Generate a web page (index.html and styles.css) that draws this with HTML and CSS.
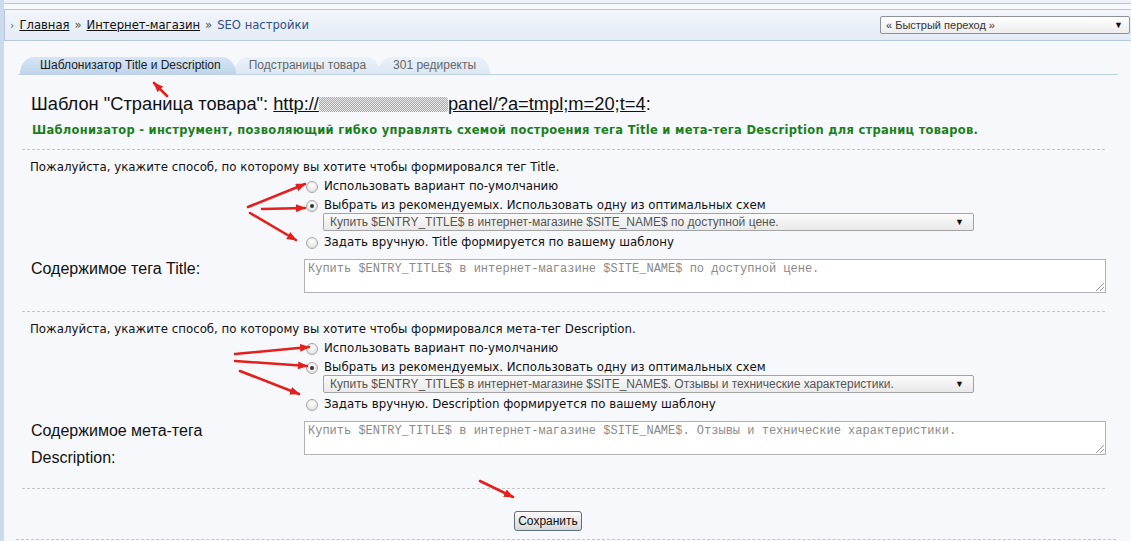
FILE: index.html
```html
<!DOCTYPE html>
<html lang="ru">
<head>
<meta charset="utf-8">
<title>SEO настройки</title>
<link rel="stylesheet" href="styles.css">
</head>
<body>
<div class="page">
  <div class="topline"></div>
  <div class="topbar">
    <div class="crumbs">
      <span class="chev">›</span>
      <a class="crumb" href="#">Главная</a>
      <span class="sep">»</span>
      <a class="crumb" href="#">Интернет-магазин</a>
      <span class="sep">»</span>
      <span class="current">SEO настройки</span>
    </div>
    <div class="quick">
      <span>« Быстрый переход »</span>
      <span class="tri">▼</span>
    </div>
  </div>

  <div class="content">
    <div class="tabs">
      <div class="tab active">Шаблонизатор Title и Description</div>
      <div class="tab">Подстраницы товара</div>
      <div class="tab">301 редиректы</div>
    </div>

    <h1 class="heading">Шаблон "Страница товара": <a class="url" href="#">http://<span class="blur"></span>panel/?a=tmpl;m=20;t=4</a>:</h1>
    <p class="green">Шаблонизатор - инструмент, позволяющий гибко управлять схемой построения тега Title и мета-тега Description для страниц товаров.</p>
    <div class="dash"></div>

    <div class="section">
      <div class="ask">Пожалуйста, укажите способ, по которому вы хотите чтобы формировался тег Title.</div>
      <div class="radios">
        <div class="radio-row"><span class="radio"></span>Использовать вариант по-умолчанию</div>
        <div class="radio-row"><span class="radio checked"></span>Выбрать из рекомендуемых. Использовать одну из оптимальных схем</div>
        <div class="select"><span>Купить $ENTRY_TITLE$ в интернет-магазине $SITE_NAME$ по доступной цене.</span><span class="tri">▼</span></div>
        <div class="radio-row third"><span class="radio"></span>Задать вручную. Title формируется по вашему шаблону</div>
      </div>
      <div class="field">
        <div class="label">Содержимое тега Title:</div>
        <div class="textarea">Купить $ENTRY_TITLE$ в интернет-магазине $SITE_NAME$ по доступной цене.<span class="grip"></span></div>
      </div>
    </div>
    <div class="dash d2"></div>

    <div class="section">
      <div class="ask">Пожалуйста, укажите способ, по которому вы хотите чтобы формировался мета-тег Description.</div>
      <div class="radios">
        <div class="radio-row"><span class="radio"></span>Использовать вариант по-умолчанию</div>
        <div class="radio-row"><span class="radio checked"></span>Выбрать из рекомендуемых. Использовать одну из оптимальных схем</div>
        <div class="select"><span>Купить $ENTRY_TITLE$ в интернет-магазине $SITE_NAME$. Отзывы и технические характеристики.</span><span class="tri">▼</span></div>
        <div class="radio-row third"><span class="radio"></span>Задать вручную. Description формируется по вашему шаблону</div>
      </div>
      <div class="field">
        <div class="label">Содержимое мета-тега<br>Description:</div>
        <div class="textarea">Купить $ENTRY_TITLE$ в интернет-магазине $SITE_NAME$. Отзывы и технические характеристики.<span class="grip"></span></div>
      </div>
    </div>
    <div class="dash d3"></div>

    <div class="actions"><button class="save" type="button">Сохранить</button></div>
    <div class="dash d4"></div>
  </div>

  <svg class="arrows" width="1131" height="541" viewBox="0 0 1131 541" xmlns="http://www.w3.org/2000/svg">
    <defs>
      <marker id="ah" markerWidth="10" markerHeight="8" refX="9" refY="4" orient="auto" markerUnits="userSpaceOnUse">
        <path d="M0,0 L10,4 L0,8 Z" fill="#e3201b"/>
      </marker>
    </defs>
    <g stroke="#e3201b" stroke-width="2.6" fill="none" marker-end="url(#ah)" stroke-linecap="round">
      <line x1="167" y1="96" x2="154" y2="83"/>
      <line x1="248" y1="207" x2="305" y2="184"/>
      <line x1="262" y1="209" x2="305" y2="208"/>
      <line x1="250" y1="213" x2="296" y2="240"/>
      <line x1="235" y1="354" x2="309" y2="347"/>
      <line x1="235" y1="361" x2="307" y2="366"/>
      <line x1="240" y1="371" x2="299" y2="394"/>
      <line x1="480" y1="481" x2="513" y2="497"/>
    </g>
  </svg>
</div>
</body>
</html>
```

FILE: styles.css
```css
* { box-sizing: border-box; }

html, body {
  margin: 0;
  padding: 0;
  background: #f5f7fb;
}

.page {
  position: relative;
  width: 1131px;
  height: 541px;
  overflow: hidden;
  background: #f6f8fc;
  border-left: 4px solid #cbdaec;
  font-family: "DejaVu Sans", Verdana, sans-serif;
  color: #111;
}

.topline {
  height: 4px;
  background: #eef3f9;
  border-bottom: 1px solid #b9c9dc;
}

.topbar {
  margin-top: 5px;
  height: 32px;
  border: 1px solid #b7c8dd;
  border-right: none;
  background: linear-gradient(#f3f6fb, #e3ebf5);
  display: flex;
  align-items: center;
  justify-content: space-between;
  padding: 0 1px 0 5px;
}

.crumbs {
  font-size: 11.6px;
  display: flex;
  align-items: center;
  gap: 5px;
}

.chev { color: #666; font-size: 11px; margin-right: 0; }
.crumb { color: #111; text-decoration: underline; }
.sep { color: #555; }
.current { color: #2f4f8a; }

.quick {
  width: 250px;
  height: 18px;
  border: 1px solid #8f9399;
  border-radius: 2px;
  background: linear-gradient(#ffffff, #ececec);
  font-family: "Liberation Sans", Arial, sans-serif;
  font-size: 11px;
  color: #333;
  display: flex;
  align-items: center;
  justify-content: space-between;
  padding: 0 6px 0 5px;
}

.tri { font-size: 9px; color: #111; }

.content {
  margin-left: 14px;
  width: 1100px;
}

.tabs {
  margin-top: 16px;
  height: 18px;
  display: flex;
  padding-left: 2px;
  border-bottom: 1px solid #bfd1e6;
  font-family: "Liberation Sans", Arial, sans-serif;
  font-size: 12px;
}

.tab {
  height: 17px;
  line-height: 17px;
  padding: 0 14px 0 15px;
  background: linear-gradient(#eaf1f9, #dde8f4);
  color: #666;
  border-radius: 14px 14px 0 0 / 17px 17px 0 0;
  margin-right: -2px;
}

.tab.active {
  background: linear-gradient(#d6e5f4, #bfd5ec);
  color: #1a1a1a;
  padding: 0 15px 0 20px;
  position: relative;
  z-index: 1;
}

.heading {
  margin: 18px 0 0 13px;
  font-family: "Liberation Sans", Arial, sans-serif;
  font-weight: normal;
  font-size: 18.3px;
  line-height: 22px;
  color: #111;
}

.url { color: #111; text-decoration: underline; }

.blur {
  display: inline-block;
  width: 129px;
  height: 15px;
  vertical-align: -2px;
  background:
    repeating-conic-gradient(#8d8d8d 0 25%, #e6e6e6 0 50%) 0 0 / 2px 2px;
  opacity: 0.75;
  border-radius: 3px;
}

.green {
  margin: 7px 0 0 14px;
  font-size: 11.5px;
  letter-spacing: 0.28px;
  line-height: 16px;
  font-weight: bold;
  color: #1b7f1b;
}

.dash {
  margin: 11px 0 0 4px;
  width: 1083px;
  border-top: 1px dashed #c3c6cb;
}

.section {
  padding-left: 12px;
}

.ask {
  margin-top: 9px;
  font-size: 11.8px;
  line-height: 16px;
}

.radios {
  margin-left: 276px;
  margin-top: 2px;
  font-size: 11.8px;
}

.radio-row {
  height: 19px;
  line-height: 19px;
  display: flex;
  align-items: center;
  white-space: nowrap;
}

.radio-row.third { margin-top: 2px; }

.radio {
  width: 12px;
  height: 12px;
  border-radius: 50%;
  border: 1px solid #a8a8a8;
  background: radial-gradient(circle at 50% 35%, #ffffff, #d9d9d9);
  margin-right: 6px;
  flex: none;
  position: relative;
}

.radio.checked::after {
  content: "";
  position: absolute;
  left: 3px;
  top: 3px;
  width: 4px;
  height: 4px;
  border-radius: 50%;
  background: #333;
}

.select {
  margin: -2px 0 0 17px;
  width: 651px;
  height: 18px;
  border: 1px solid #a3a3a3;
  border-radius: 2px;
  background: linear-gradient(#fbfbfb, #e9e9e9);
  font-family: "Liberation Sans", Arial, sans-serif;
  font-size: 12px;
  color: #555;
  display: flex;
  align-items: center;
  justify-content: space-between;
  padding: 0 9px 0 6px;
}

.field {
  display: flex;
  margin-top: 7px;
}

.label {
  width: 274px;
  margin-top: -4px;
  font-family: "Liberation Sans", Arial, sans-serif;
  font-size: 16px;
  line-height: 27px;
  padding-left: 1px;
  color: #111;
}

.textarea {
  position: relative;
  width: 802px;
  height: 34px;
  border: 1px solid #b2b2b2;
  background: #fff;
  font-family: "Liberation Mono", "Courier New", monospace;
  font-size: 12px;
  line-height: 14px;
  color: #8a8a8a;
  padding: 2px 3px;
  white-space: nowrap;
  overflow: hidden;
}

.grip {
  position: absolute;
  right: 1px;
  bottom: 1px;
  width: 8px;
  height: 8px;
  background: linear-gradient(135deg, transparent 45%, #999 45%, #999 55%, transparent 55%, transparent 70%, #999 70%, #999 80%, transparent 80%);
}

.dash.d2 { margin-top: 18px; }
.dash.d3 { margin-top: 17px; }

.actions {
  margin-top: 21px;
  padding-left: 496px;
}

.save {
  width: 68px;
  height: 20px;
  padding: 0;
  border: 1px solid #5f6f7f;
  border-radius: 3px;
  background: linear-gradient(#fafafa, #d8d8d8);
  font-family: "Liberation Sans", Arial, sans-serif;
  font-size: 12px;
  color: #111;
}

.dash.d4 {
  margin-top: 8px;
  margin-left: -2px;
  width: 1100px;
}

.arrows {
  position: absolute;
  left: -4px;
  top: 0;
  pointer-events: none;
}
```
